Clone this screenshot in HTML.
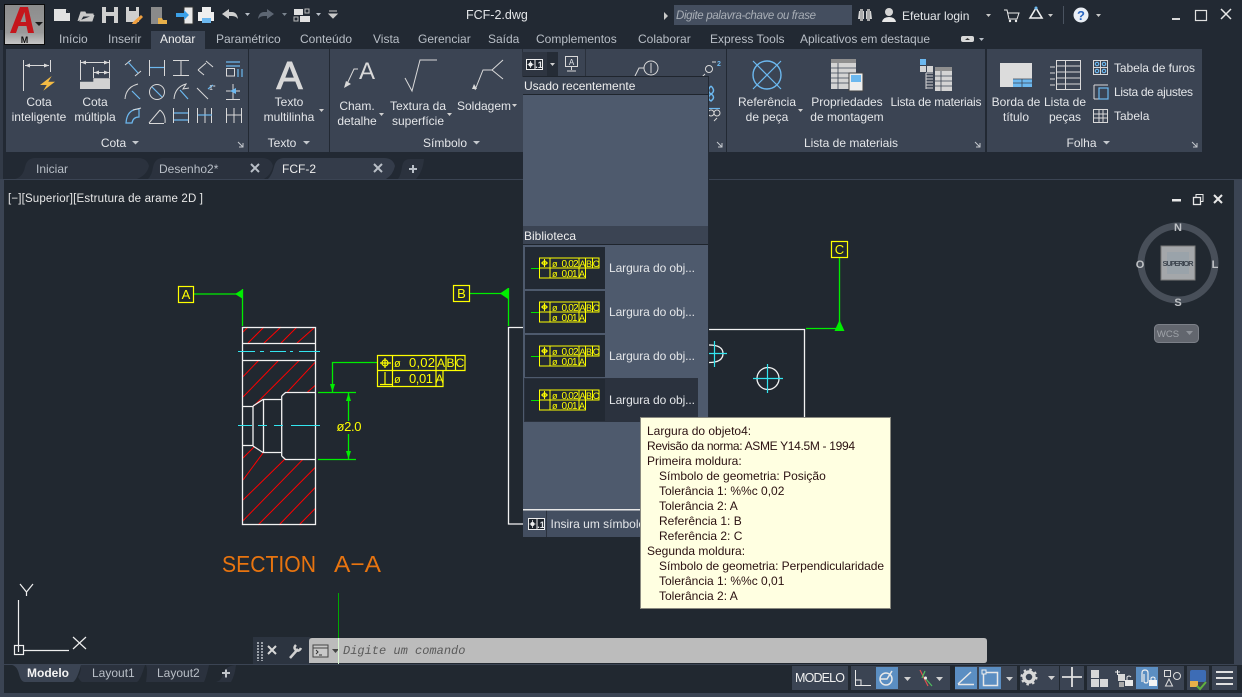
<!DOCTYPE html>
<html><head><meta charset="utf-8"><style>
html,body{margin:0;padding:0;background:#212830;width:1242px;height:697px;overflow:hidden}
svg{display:block}
text{font-family:"Liberation Sans",sans-serif;font-size:12px;fill:#e4e6e9}
.m{text-anchor:middle}
.tab{fill:#b9bfc7}
.t{fill:#2a1010}
.c{font-family:"Liberation Mono",monospace;font-style:italic;font-size:12px;fill:#5a5a5a}
.ic{fill:none;stroke:#d9d9d9;stroke-width:1}
.bl{fill:none;stroke:#6cb8ef;stroke-width:1.2}
.sb{fill:none;stroke:#e8e8e8;stroke-width:1.5}
</style></head><body>
<svg width="1242" height="697" viewBox="0 0 1242 697" xmlns="http://www.w3.org/2000/svg">
<rect width="1242" height="697" fill="#212830"/>
<rect x="0" y="0" width="1242" height="180" fill="#222933"/>
<rect x="0" y="180" width="4" height="517" fill="#3b4453"/>
<rect x="1234" y="180" width="8" height="484" fill="#3b4453"/>
<rect x="0" y="30" width="3" height="150" fill="#323a47"/>

<!-- App button -->
<defs><linearGradient id="ab" x1="0" y1="0" x2="0" y2="1"><stop offset="0" stop-color="#8c8c8c"/><stop offset=".7" stop-color="#9a9a9a"/><stop offset="1" stop-color="#c8c8c8"/></linearGradient></defs>
<rect x="4.500" y="4.500" width="40" height="40" fill="url(#ab)" stroke="#0c0c0c"/>
<path d="M10 33 L20 7 L28 7 L34 33 L28 33 L26.500 26 L18.500 26 L16 33 Z M20.500 22 L26 22 L24.500 12 Z" fill="#c4161c" fill-rule="evenodd"/>
<path d="M35 22 h8 l-4 4z" fill="#1a1a1a"/>
<text x="24.500" y="43" class="m" style="font-size:9px;font-weight:bold;fill:#111">M</text>

<!-- QAT -->
<path d="M54 9 h12 l4 4 v8 h-16z" fill="#e2e2e2"/><path d="M66 9 l4 4 h-4z" fill="#222933"/>
<path d="M78 21 l3-9 h4 l1 2 h7 v2 h-10 l-3 5 h12 l2-6" fill="#c9c9c9" stroke="#c9c9c9"/>
<rect x="102" y="7" width="16" height="16" fill="#cfcfcf"/><rect x="106" y="7" width="8" height="5" fill="#222933"/><rect x="106" y="16" width="8" height="7" fill="#222933"/>
<rect x="126" y="7" width="13" height="15" fill="#cfcfcf"/><rect x="129" y="7" width="7" height="4" fill="#222933"/><path d="M133 22 l8-7 2 2-7 7-4 0z" fill="#f0a040"/>
<rect x="151" y="7" width="11" height="17" fill="#8a8a8a"/><path d="M158 18 h4 l1 2 h4 v4 h-9z" fill="#e8b04a"/>
<rect x="184" y="7" width="9" height="17" fill="#e8e8e8" stroke="#333"/><path d="M176 13 h8 v-3 l5 5-5 5 v-3 h-8z" fill="#3ba0e8"/>
<rect x="198" y="12" width="16" height="9" fill="#eee"/><rect x="202" y="7" width="9" height="5" fill="#eee"/><rect x="202" y="18" width="9" height="5" fill="#6cb8ef"/>
<path d="M222 14 l7-5 v3 h3 q5 0 6 7 q-2-3-6-3 h-3 v3z" fill="#cfcfcf"/>
<path d="M245 13 h5 l-2.500 3z" fill="#b9bfc7"/>
<path d="M274 14 l-7-5 v3 h-3 q-5 0-6 7 q2-3 6-3 h3 v3z" fill="#5d6673"/>
<path d="M282 13 h5 l-2.500 3z" fill="#7b848f"/>
<rect x="294" y="9" width="9" height="6" fill="#e0e0e0"/><rect x="300" y="16" width="10" height="6" fill="#e0e0e0"/><rect x="294" y="17" width="4" height="4" fill="none" stroke="#bbb"/><rect x="305" y="9" width="4" height="4" fill="none" stroke="#bbb"/>
<path d="M316 13 h5 l-2.500 3z" fill="#b9bfc7"/>
<path d="M329 11 h8 M329 14 h8 l-4 4z" fill="#c9c9c9" stroke="#c9c9c9"/>

<text x="466" y="19" style="font-size:12.500px">FCF-2.dwg</text>
<path d="M664 12 l4 4 -4 4z" fill="#c9c9c9"/>
<rect x="674" y="5" width="178" height="20" fill="#444e5f"/>
<text x="676" y="19" textLength="140" style="font-style:italic;fill:#a8aeb6;font-size:11.500px">Digite palavra-chave ou frase</text>
<path d="M859 11 h5 v8 h-6z M866 11 h5 l1 8 h-6z" fill="#d5d5d5"/><rect x="860" y="9" width="3" height="12" fill="#aaa"/><rect x="867" y="9" width="3" height="12" fill="#aaa"/>
<circle cx="889" cy="12" r="4" fill="#d5d5d5"/><path d="M882 22 q1-5 7-5 q6 0 7 5z" fill="#e8e8e8"/>
<text x="902" y="20">Efetuar login</text>
<path d="M986 14 h5 l-2.500 3z" fill="#c9c9c9"/>
<path d="M1004 10 h3 l2 9 h8 l2-6 h-11" class="ic" style="stroke:#eee"/><circle cx="1010" cy="21" r="1.200" fill="#eee"/><circle cx="1016" cy="21" r="1.200" fill="#eee"/>
<path d="M1030 18 l6-10 6 10z" class="ic" style="stroke:#eee;stroke-width:1.600"/><circle cx="1036" cy="8" r="1.500" fill="#6cb8ef"/>
<path d="M1048 14 h5 l-2.500 3z" fill="#c9c9c9"/>
<rect x="1063" y="6" width="1" height="18" fill="#4a5360"/>
<circle cx="1081" cy="15" r="7.500" fill="#e9eef5"/><text x="1081" y="20" class="m" style="font-weight:bold;font-size:13px;fill:#2a66c0">?</text>
<path d="M1096 14 h5 l-2.500 3z" fill="#c9c9c9"/>
<rect x="1172" y="18" width="8" height="2" fill="#d8d8d8"/>
<rect x="1195.500" y="10.500" width="11" height="10" fill="none" stroke="#e0e0e0" stroke-width="1.200"/>
<path d="M1221 9 l10 10 M1231 9 l-10 10" stroke="#e8e8e8" stroke-width="1.500"/>

<!-- Ribbon tabs -->
<rect x="151" y="31" width="54" height="18" fill="#3b4453"/>
<g>
<text x="59" y="43" class="tab">Início</text><text x="108" y="43" class="tab">Inserir</text>
<text x="160" y="43" style="fill:#f0f0f0">Anotar</text>
<text x="216" y="43" class="tab">Paramétrico</text><text x="300" y="43" class="tab">Conteúdo</text><text x="373" y="43" class="tab">Vista</text>
<text x="418" y="43" class="tab">Gerenciar</text><text x="488" y="43" class="tab">Saída</text><text x="536" y="43" class="tab">Complementos</text>
<text x="638" y="43" class="tab">Colaborar</text><text x="710" y="43" class="tab">Express Tools</text><text x="800" y="43" class="tab">Aplicativos em destaque</text>
</g>
<rect x="961" y="36" width="13" height="6" rx="2" fill="#d8d8d8"/><path d="M965 40 l2.500-2 2.500 2z" fill="#333"/>
<path d="M979 38 h5 l-2.500 3z" fill="#b9bfc7"/>

<!-- Ribbon panels -->
<rect x="6" y="49" width="242" height="103" fill="#3b4453"/>
<rect x="249" y="49" width="80" height="103" fill="#3b4453"/>
<rect x="330" y="49" width="396" height="103" fill="#3b4453"/>
<rect x="727" y="49" width="258" height="103" fill="#3b4453"/>
<rect x="987" y="49" width="215" height="103" fill="#3b4453"/>
<rect x="522" y="49" width="1" height="28" fill="#2a313c"/>
<rect x="585" y="49" width="1" height="28" fill="#2a313c"/>

<!-- Cota icons -->
<path d="M23.500 60 v31 M50.500 60 v12 M25 65.500 h24" class="ic"/><path d="M25 65.500 l5-2 v4z M49 65.500 l-5-2 v4z" fill="#d9d9d9"/>
<path d="M51.700 76 L40 85 H46.700 L43.300 90.700 L55 81.700 H48.300z" fill="#f4bb44"/>
<path d="M80.500 60 v20 M109.500 60 v18 M81 62.500 h28 M94 72.500 h15 M93.500 67 v11" class="ic"/>
<path d="M80 89 V81.700 H93.300 V78.300 H110 V89z" fill="#d2d2d2"/>
<path d="M81 62.500 l5-2 v4z M109 62.500 l-5-2 v4z M94 72.500 l5-2 v4z M109 72.500 l-5-2 v4z" fill="#d9d9d9"/>

<path d="M125 65 l6-5 M135 76 l6-5" class="ic"/><path d="M128 62 l10 11" class="bl" stroke-width="1.500"/>
<path d="M149.500 60 v16 M164.500 60 v16" class="ic"/><path d="M150 67.500 h14" class="bl"/>
<path d="M173 60.500 h16 M173 75.500 h16" class="ic"/><path d="M181 61 v14" class="ic"/>
<path d="M198 70 l8-7 M206 61 l7 6 M198 70 l6 5" class="ic"/>
<rect x="226.500" y="68.500" width="8" height="7.500" class="ic"/><path d="M226 62 h14 M226 66 h14 M238 69 v8 M242 69 v8" class="bl"/>
<path d="M125 99 q1-12 13-15" class="ic"/><path d="M132 91 l8 8" class="bl"/>
<circle cx="157" cy="92" r="7.500" class="ic"/><path d="M152 87 l10 10" class="bl"/>
<path d="M174 99 q1-12 12-15 l-3 5 l6-1" class="ic"/><path d="M180 90 l8 9" class="bl"/>
<path d="M197 88 l11 11" class="ic"/><path d="M208 89 l5-4" class="bl"/><text x="209" y="90" style="font-size:7px">1°</text>
<path d="M226 91 h14 M233 84 v16 M226 99.500 h14" class="ic"/><path d="M230 91 l6-3 v6z" fill="#6cb8ef"/>
<path d="M126 123 q1-14 13-14 v8 q-6 0-7 6z" class="bl"/><path d="M133 110 l8-2" class="ic"/>
<path d="M149 123.500 h15 M149 123 l11-13 M160 110 q6 5 5 13" class="ic"/>
<path d="M173.500 108 v15 M188.500 108 v15" class="ic"/><path d="M174 113 h14 M174 120 h14" class="bl"/>
<path d="M197.500 108 v15 M205 108 v15 M211.500 108 v15" class="ic"/><path d="M198 115 h14" class="bl"/>
<path d="M226.500 108 v15 M241.500 108 v15 M234 108 v15" class="ic"/><path d="M227 115 h14" class="ic"/>

<text x="39" y="106" class="m">Cota</text><text x="39" y="121" class="m">inteligente</text>
<text x="95" y="106" class="m">Cota</text><text x="95" y="121" class="m">múltipla</text>
<text x="113.500" y="147" class="m">Cota</text><path d="M132 141 h7 l-3.500 3.500z" fill="#c4c8cd"/>
<path d="M238 142 l5 5 M243 143 v4 h-4" stroke="#c4c8cd" fill="none"/>

<text x="289.500" y="89" class="m" style="font-size:39px;fill:#d8d8d8;stroke:#d8d8d8;stroke-width:1">A</text>
<text x="289" y="106" class="m">Texto</text><text x="289" y="121" class="m">multilinha</text>
<path d="M319 109 h5 l-2.500 3z" fill="#d0d0d0"/>
<text x="282" y="147" class="m">Texto</text><path d="M303 141 h7 l-3.500 3.500z" fill="#c4c8cd"/>

<!-- Simbolo -->
<text x="367" y="79" class="m" style="font-size:24px;fill:#d8d8d8">A</text>
<path d="M358 69 h-4 l-8 17" class="ic"/><path d="M344 88 l2-7 5 3z" fill="#d9d9d9"/>
<text x="357" y="110" class="m">Cham.</text><text x="357" y="125" class="m">detalhe</text>
<path d="M379 113 h5 l-2.500 3z" fill="#d0d0d0"/>
<path d="M405 78 l7 13 8-31 h17" class="ic" style="fill:none"/>
<text x="418" y="110" class="m">Textura da</text><text x="418" y="125" class="m">superfície</text>
<path d="M447 113 h5 l-2.500 3z" fill="#d0d0d0"/>
<path d="M475 90 l8-20 h9 l11-10 M492 70 l11 9" class="ic"/><path d="M472 89 l5 0 -3-5z" fill="#d9d9d9"/>
<text x="484" y="110" class="m">Soldagem</text><path d="M512 104 h5 l-2.500 3z" fill="#d0d0d0"/>
<text x="445" y="147" class="m">Símbolo</text><path d="M473 141 h7 l-3.500 3.500z" fill="#c4c8cd"/>

<!-- FCF button -->
<rect x="522" y="52" width="25" height="25" fill="#2e3541"/><rect x="547" y="52" width="11" height="25" fill="#252c36"/>
<rect x="526.500" y="59.500" width="16" height="10" fill="#1d232b" stroke="#eee"/>
<path d="M535 60 v9" stroke="#eee"/><path d="M530.500 61 v7 M527.500 64.500 h6" stroke="#eee" stroke-width=".8"/><circle cx="530.500" cy="64.500" r="2" fill="#eee"/>
<text x="539" y="68" class="m" style="font-size:9px;font-weight:bold">.1</text>
<path d="M550 63 h5 l-2.500 3z" fill="#d0d0d0"/>
<rect x="565.500" y="56.500" width="12" height="10" class="ic"/><text x="571.500" y="65" class="m" style="font-size:8px">A</text><path d="M571.500 67 v3 M567 71 h9" class="ic"/>
<circle cx="651" cy="68" r="7" class="ic"/><path d="M651 63 v10 M644 68 h-5 l-4 8" class="ic"/>
<circle cx="709" cy="69" r="3.500" class="ic"/><path d="M705 74 l-3 3" class="ic"/><path d="M712 62 h4" class="ic"/><text x="717" y="66" style="font-size:7px;fill:#6cb8ef;font-weight:bold">2</text>
<path d="M711 86 q-5 5 0 8 q5 3 0 7 q-5-3 0-7 q5-3 0-8" class="bl" style="stroke-width:1.500"/>
<path d="M708 108.500 h12" class="bl"/><circle cx="711" cy="113" r="3" class="ic"/><circle cx="717" cy="113" r="3" class="ic"/><path d="M714 121 l3-3" class="ic"/>
<path d="M717 142 l5 5 M722 143 v4 h-4" stroke="#c4c8cd" fill="none"/>

<!-- Lista de materiais -->
<circle cx="767" cy="75" r="14" class="bl" style="stroke-width:1.400"/><path d="M753 61 l28 28 M781 61 l-28 28" class="bl"/>
<text x="767" y="106" class="m">Referência</text><text x="767" y="121" class="m">de peça</text>
<path d="M798 109 h5 l-2.500 3z" fill="#d0d0d0"/>
<rect x="831" y="59" width="25" height="30" fill="#d4d4d4"/><rect x="831" y="59" width="25" height="4" fill="#8f8f8f"/>
<path d="M831 68 h25 M831 73 h25 M831 78 h25 M831 83 h25 M838 63 v26" stroke="#3b4453" stroke-width=".8"/>
<rect x="849" y="73" width="14" height="18" fill="#eee" stroke="#444"/><rect x="851" y="75" width="10" height="7" fill="#6cb8ef"/>
<text x="847" y="106" class="m">Propriedades</text><text x="847" y="121" class="m">de montagem</text>
<rect x="920" y="59" width="6" height="6" fill="#6cb8ef"/><rect x="920" y="66" width="6" height="6" fill="#d4d4d4"/><rect x="927" y="66" width="6" height="6" fill="#d4d4d4"/>
<path d="M926 73 h7 M926 76 h7 M926 79 h7 M926 82 h7 M926 85 h7 M926 88 h7 M926 73 v16" stroke="#d4d4d4" fill="none"/>
<rect x="935" y="67" width="17" height="24" fill="#d4d4d4"/><rect x="935" y="67" width="17" height="4" fill="#8f8f8f"/><path d="M935 76 h17 M935 81 h17 M935 86 h17 M941 71 v20" stroke="#3b4453" stroke-width=".8"/>
<text x="936" y="106" class="m" textLength="91">Lista de materiais</text>
<text x="851" y="147" class="m">Lista de materiais</text>
<path d="M975 142 l5 5 M980 143 v4 h-4" stroke="#c4c8cd" fill="none"/>

<!-- Folha -->
<rect x="1000" y="63" width="32" height="24" fill="#dcdcdc"/><rect x="1013" y="79" width="19" height="8" fill="#6cb8ef"/><path d="M1013 79 h19 M1013 83 h19 M1022 79 v8" stroke="#3b4453" stroke-width=".8"/>
<rect x="1056.500" y="60.500" width="24" height="29" class="ic"/><path d="M1056 66 h25 M1056 72 h25 M1056 78 h25 M1056 84 h25 M1065.500 60 v30" class="ic"/>
<path d="M1050 67 h5 M1050 73 h5 M1050 79 h5 M1050 85 h5" class="ic"/>
<text x="1016" y="106" class="m">Borda de</text><text x="1016" y="121" class="m">título</text>
<text x="1065" y="106" class="m">Lista de</text><text x="1065" y="121" class="m">peças</text>
<rect x="1093.500" y="60.500" width="14" height="14" class="ic"/><path d="M1100.500 61 v14 M1094 67.500 h14" class="ic"/>
<circle cx="1097" cy="64" r="1.700" class="bl"/><circle cx="1104" cy="64" r="1.700" class="bl"/><circle cx="1097" cy="71" r="1.700" class="bl"/><circle cx="1104" cy="71" r="1.700" class="bl"/>
<text x="1114" y="72" textLength="81">Tabela de furos</text>
<path d="M1094 85 h14 M1094 99 h14 M1094 85 v14" class="ic"/><rect x="1099" y="88" width="9" height="11" class="bl"/>
<text x="1114" y="96" textLength="79">Lista de ajustes</text>
<rect x="1093.500" y="109.500" width="14" height="13" class="ic"/><path d="M1094 114 h14 M1094 118 h14 M1099 110 v13 M1103 110 v13" class="ic"/>
<text x="1114" y="120">Tabela</text>
<text x="1081.500" y="147" class="m">Folha</text><path d="M1103 141 h7 l-3.500 3.500z" fill="#c4c8cd"/>
<path d="M1192 142 l5 5 M1197 143 v4 h-4" stroke="#c4c8cd" fill="none"/>

<!-- File tabs -->
<path d="M15 179 q8-2 10-12 q2-9 10-9 h103 q9 0 11 8 q-2 9-12 13z" fill="#2b323e"/>
<path d="M148 179 q4-4 5-12 q2-9 10-9 h99 q9 0 11 8 q-2 9-9 13z" fill="#2b323e"/>
<path d="M268 179 q4-4 6-12 q2-9 10-9 h100 q9 0 11 8 q-2 9-9 13z" fill="#343c4a"/>
<path d="M398 179 q3-4 4-12 q1-8 8-8 h14 q-1 12-8 20z" fill="#2b323e"/>
<rect x="0" y="179" width="1242" height="1" fill="#3b4453"/>
<text x="36" y="173" class="tab">Iniciar</text>
<text x="159" y="173" class="tab">Desenho2*</text>
<text x="282" y="173" style="fill:#eee">FCF-2</text>
<path d="M251 164 l8 8 M259 164 l-8 8" stroke="#b9bfc7" stroke-width="2"/>
<path d="M374 164 l8 8 M382 164 l-8 8" stroke="#b9bfc7" stroke-width="2"/>
<path d="M413 165 v8 M409 169 h8" stroke="#b9bfc7" stroke-width="2"/>

<!-- Viewport label -->
<text x="8" y="202" textLength="195" style="fill:#e8e8e8;font-size:11.500px">[−][Superior][Estrutura de arame 2D ]</text>
<rect x="1172" y="199" width="9" height="2.500" fill="#e8e8e8"/>
<rect x="1193.500" y="197.500" width="7" height="7" fill="none" stroke="#e8e8e8" stroke-width="1.300"/><path d="M1196 197 v-2.500 h7 v7 h-2.500" fill="none" stroke="#e8e8e8"/>
<path d="M1214 195 l8 8 M1222 195 l-8 8" stroke="#e8e8e8" stroke-width="2"/>

<!-- Nav cube -->
<circle cx="1178" cy="263" r="37" fill="none" stroke="#484f59" stroke-width="7"/>
<rect x="1161" y="246" width="34" height="34" fill="#a4a7aa" stroke="#777"/><rect x="1167" y="252" width="22" height="22" fill="#9aa3aa"/>
<text x="1178" y="266" class="m" textLength="31" style="font-size:7.500px;font-weight:bold;fill:#3e4650">SUPERIOR</text>
<text x="1178" y="231" class="m" style="font-size:11px;font-weight:bold;fill:#bfc2c5">N</text>
<text x="1178" y="306" class="m" style="font-size:11px;font-weight:bold;fill:#bfc2c5">S</text>
<text x="1140" y="268" class="m" style="font-size:11px;font-weight:bold;fill:#bfc2c5">O</text>
<text x="1215" y="268" class="m" style="font-size:11px;font-weight:bold;fill:#bfc2c5">L</text>
<rect x="1154.500" y="324.500" width="44" height="18" rx="4" fill="#62666e" stroke="#7c8088"/>
<text x="1168" y="337" class="m" style="font-size:9.500px;fill:#a0a4aa">WCS</text><path d="M1186 331 h7 l-3.500 4z" fill="#8f939a"/>

<!-- Drawing -->
<g fill="none">
<!-- Hatch -->
<g stroke="#ff0000" stroke-width="1">
<path d="M243 332 L248 327 M248 343 L264 327 M264 343 L281 327 M281 343 L297 327 M297 343 L314 328"/>
<path d="M243 376.700 L259 360 M243 397 L278 361 M253 406.700 L299 360.700 M286.700 392.700 L315.700 361.700 M306.700 392.700 L315.700 385"/>
<path d="M243 458 L254 447 M243 480 L263 453 M243 500 L285 459 M243 520.700 L303 459.300 M258 525 L315.700 467 M279 525 L315.700 487 M299 525 L315.700 508"/>
</g>
<!-- Part -->
<g stroke="#f2f2f2" stroke-width="1.300">
<rect x="242.500" y="327.500" width="73" height="197"/>
<path d="M243 343.500 H315 M243 360.500 H315"/>
<path d="M243 406.500 H253 V445.500 H243"/>
<path d="M253 406 L263 399.500 H281.700 M253 446 L263 452.500 H281.700 M263.500 399.500 V452.500"/>
<path d="M281.700 396 L285.500 392.500 H315.500 M281.700 456 L285.500 459.500 H315.500 M281.700 396 V456"/>
</g>
<g stroke="#33e6f0" stroke-width="1">
<path d="M238 351.500 H255 M260 351.500 H264 M270 351.500 H286 M290 351.500 H293 M299 351.500 H320"/>
<path d="M238 425.500 H252 M258 425.500 H267 M274 425.500 H283 M291 425.500 H320"/>
</g>
<!-- Dim green -->
<g stroke="#00ee00" stroke-width="1.300">
<path d="M194 294 H243 M242.500 289 V326"/>
<path d="M318 392.500 H356 M318 459.500 H356"/>
<path d="M348.500 393 V421 M348.500 434 V459"/>
<path d="M377 362.500 H332.500 V392"/>
<path d="M470 293.500 H508 M508.500 288 V326"/>
<path d="M806 328.500 H839 M839.500 258 V330"/>
</g>
<g fill="#00ee00">
<path d="M235 294 L243 289 V299z"/>
<path d="M500 293.500 L508 288 V299z"/>
<path d="M834.500 331 L839.500 320 L844.500 331z"/>
<path d="M332.500 392 L330 384 H335z"/>
<path d="M348.500 393 L346 401 H351z M348.500 459 L346 451 H351z"/>
</g>
<rect x="338" y="593" width="1" height="45" fill="#00a800"/>
<!-- Labels -->
<g stroke="#ffff00" stroke-width="1.200">
<rect x="178.500" y="286.500" width="15" height="16"/><rect x="453.500" y="285.500" width="16" height="16"/><rect x="831.500" y="241.500" width="16" height="16"/>
<path d="M377.500 355.500 H465 V370.500 H443 V386.500 H377.500 Z M377.500 370.500 H443 M392.500 355.500 V386.500 M436 355.500 V386.500 M446 355.500 V370.500 M455.500 355.500 V370.500"/>
<path d="M385 358 V368 M380 363 H391"/><circle cx="385" cy="363" r="3"/>
<path d="M385 372 V384 M380 384.500 H392"/>
</g>
<!-- Right part -->
<g stroke="#f2f2f2" stroke-width="1.300">
<path d="M523 327.500 H508.500 V524 H523"/>
<path d="M708 329.500 H804.500 V417"/>
<circle cx="768" cy="378.500" r="11"/>
<path d="M709 345 Q723 345 723 353.500 Q723 362.500 709 362.500"/>
</g>
<g stroke="#33e6f0" stroke-width="1.200">
<path d="M753 378.500 H783 M767.500 364 V393"/>
<path d="M709 353.500 H727 M714.500 341 V367"/>
</g>
</g>
<text x="186" y="299" class="m" style="font-size:13px;fill:#ffff00">A</text>
<text x="461.500" y="298" class="m" style="font-size:13px;fill:#ffff00">B</text>
<text x="839.500" y="254" class="m" style="font-size:13px;fill:#ffff00">C</text>
<text x="409" y="367" textLength="26" style="font-size:13px;fill:#ffff00">0,02</text>
<text x="394" y="367" style="font-size:11px;fill:#ffff00">ø</text>
<text x="394" y="383" style="font-size:11px;fill:#ffff00">ø</text>
<text x="409" y="383" textLength="24" style="font-size:13px;fill:#ffff00">0,01</text>
<text x="441" y="367" class="m" style="font-size:12px;fill:#ffff00">A</text>
<text x="450.500" y="367" class="m" style="font-size:12px;fill:#ffff00">B</text>
<text x="460" y="367" class="m" style="font-size:12px;fill:#ffff00">C</text>
<text x="439.500" y="383" class="m" style="font-size:12px;fill:#ffff00">A</text>
<text x="349" y="431" class="m" style="font-size:13px;fill:#ffff00" textLength="25">ø2.0</text>
<text x="222" y="572" textLength="94" lengthAdjust="spacingAndGlyphs" style="font-size:23.500px;fill:#e8740f">SECTION</text>
<text x="334" y="572" textLength="47" lengthAdjust="spacingAndGlyphs" style="font-size:23.500px;fill:#e8740f">A−A</text>

<!-- UCS -->
<path d="M18.500 600 V652 M24 650.500 H69" stroke="#eee" stroke-width="1.200" fill="none"/>
<rect x="14.500" y="645.500" width="9" height="9" fill="none" stroke="#eee" stroke-width="1.200"/>
<path d="M20 584 L26.500 592 L33 584 M26.500 592 V596" stroke="#eee" stroke-width="1.200" fill="none"/>
<path d="M73 637 L86 649 M86 637 L73 649" stroke="#eee" stroke-width="1.200" fill="none"/>

<!-- Dropdown -->
<rect x="523" y="77" width="186" height="460" fill="#4e5a6d"/>
<rect x="523" y="77" width="186" height="18" fill="#3b4453"/>
<path d="M523 76.500 H709 M523 94.500 H709" stroke="#1f252d"/>
<rect x="708" y="77" width="1" height="460" fill="#222933"/>
<text x="524" y="90" style="fill:#eee">Usado recentemente</text>
<rect x="523" y="226" width="185" height="18" fill="#3b4453"/>
<path d="M523 244.500 H708" stroke="#1f252d"/>
<text x="524" y="240" style="fill:#eee">Biblioteca</text>

<rect x="524" y="378" width="174" height="44" fill="#2b323e"/>
<rect x="525" y="247" width="80" height="42" fill="#222933"/>
<rect x="525" y="291" width="80" height="42" fill="#222933"/>
<rect x="525" y="335" width="80" height="42" fill="#222933"/>
<rect x="525" y="379" width="80" height="42" fill="#222933"/>

<g fill="none"><path d="M531 268.500 H540" stroke="#00e000"/><g stroke="#ffff00"><path d="M539.500 258 H599 V268 H585.500 V278 H539.500 Z M539.500 268 H585.500 M550 258 V278 M579 258 V278 M585.500 258 V268 M592.500 258 V268"/><path d="M544.500 259 V267 M541 263 H548"/><circle cx="544.500" cy="263" r="2"/></g>
<text x="552" y="267" style="font-size:9px;fill:#ffff00">ø</text><text x="561.500" y="267" textLength="17" style="font-size:10px;fill:#ffff00">0,02</text><text x="582.500" y="267" class="m" style="font-size:9px;fill:#ffff00">A</text><text x="589" y="267" class="m" style="font-size:9px;fill:#ffff00">B</text><text x="596" y="267" class="m" style="font-size:9px;fill:#ffff00">C</text>
<text x="552" y="277" style="font-size:9px;fill:#ffff00">ø</text><text x="561.500" y="277" textLength="16" style="font-size:10px;fill:#ffff00">0,01</text><text x="582" y="277" class="m" style="font-size:9px;fill:#ffff00">A</text></g>
<g transform="translate(0 44)" fill="none"><path d="M531 268.500 H540" stroke="#00e000"/><g stroke="#ffff00"><path d="M539.500 258 H599 V268 H585.500 V278 H539.500 Z M539.500 268 H585.500 M550 258 V278 M579 258 V278 M585.500 258 V268 M592.500 258 V268"/><path d="M544.500 259 V267 M541 263 H548"/><circle cx="544.500" cy="263" r="2"/></g>
<text x="552" y="267" style="font-size:9px;fill:#ffff00">ø</text><text x="561.500" y="267" textLength="17" style="font-size:10px;fill:#ffff00">0,02</text><text x="582.500" y="267" class="m" style="font-size:9px;fill:#ffff00">A</text><text x="589" y="267" class="m" style="font-size:9px;fill:#ffff00">B</text><text x="596" y="267" class="m" style="font-size:9px;fill:#ffff00">C</text>
<text x="552" y="277" style="font-size:9px;fill:#ffff00">ø</text><text x="561.500" y="277" textLength="16" style="font-size:10px;fill:#ffff00">0,01</text><text x="582" y="277" class="m" style="font-size:9px;fill:#ffff00">A</text></g>
<g transform="translate(0 88)" fill="none"><path d="M531 268.500 H540" stroke="#00e000"/><g stroke="#ffff00"><path d="M539.500 258 H599 V268 H585.500 V278 H539.500 Z M539.500 268 H585.500 M550 258 V278 M579 258 V278 M585.500 258 V268 M592.500 258 V268"/><path d="M544.500 259 V267 M541 263 H548"/><circle cx="544.500" cy="263" r="2"/></g>
<text x="552" y="267" style="font-size:9px;fill:#ffff00">ø</text><text x="561.500" y="267" textLength="17" style="font-size:10px;fill:#ffff00">0,02</text><text x="582.500" y="267" class="m" style="font-size:9px;fill:#ffff00">A</text><text x="589" y="267" class="m" style="font-size:9px;fill:#ffff00">B</text><text x="596" y="267" class="m" style="font-size:9px;fill:#ffff00">C</text>
<text x="552" y="277" style="font-size:9px;fill:#ffff00">ø</text><text x="561.500" y="277" textLength="16" style="font-size:10px;fill:#ffff00">0,01</text><text x="582" y="277" class="m" style="font-size:9px;fill:#ffff00">A</text></g>
<g transform="translate(0 132)" fill="none"><path d="M531 268.500 H540" stroke="#00e000"/><g stroke="#ffff00"><path d="M539.500 258 H599 V268 H585.500 V278 H539.500 Z M539.500 268 H585.500 M550 258 V278 M579 258 V278 M585.500 258 V268 M592.500 258 V268"/><path d="M544.500 259 V267 M541 263 H548"/><circle cx="544.500" cy="263" r="2"/></g>
<text x="552" y="267" style="font-size:9px;fill:#ffff00">ø</text><text x="561.500" y="267" textLength="17" style="font-size:10px;fill:#ffff00">0,02</text><text x="582.500" y="267" class="m" style="font-size:9px;fill:#ffff00">A</text><text x="589" y="267" class="m" style="font-size:9px;fill:#ffff00">B</text><text x="596" y="267" class="m" style="font-size:9px;fill:#ffff00">C</text>
<text x="552" y="277" style="font-size:9px;fill:#ffff00">ø</text><text x="561.500" y="277" textLength="16" style="font-size:10px;fill:#ffff00">0,01</text><text x="582" y="277" class="m" style="font-size:9px;fill:#ffff00">A</text></g>

<text x="609" y="272" textLength="86">Largura do obj...</text>
<text x="609" y="316" textLength="86">Largura do obj...</text>
<text x="609" y="360" textLength="86">Largura do obj...</text>
<text x="609" y="404" textLength="86">Largura do obj...</text>

<rect x="523" y="509" width="186" height="1.500" fill="#e8e8e8"/>
<rect x="523" y="510.500" width="186" height="26.500" fill="#434e60"/>
<rect x="546" y="510.500" width="1" height="26.500" fill="#2b323e"/>
<rect x="528.500" y="518.500" width="16" height="11" fill="#1d232b" stroke="#eee"/><path d="M537 519 v10" stroke="#eee"/><path d="M532.500 520 v8 M529.500 524 h6" stroke="#eee" stroke-width=".8"/><circle cx="532.500" cy="524" r="2" fill="#eee"/><text x="541" y="528" class="m" style="font-size:9px;font-weight:bold">.1</text>
<text x="550.500" y="528">Insira um símbolo</text>

<!-- Tooltip -->
<rect x="640.500" y="417.500" width="250" height="191" fill="#ffffe1" stroke="#8a8a80"/>
<g>
<text x="647" y="435" class="t">Largura do objeto4:</text>
<text x="647" y="450" class="t" textLength="208">Revisão da norma: ASME Y14.5M - 1994</text>
<text x="647" y="465" class="t">Primeira moldura:</text>
<text x="659" y="480" class="t">Símbolo de geometria: Posição</text>
<text x="659" y="495" class="t">Tolerância 1: %%c 0,02</text>
<text x="659" y="510" class="t">Tolerância 2: A</text>
<text x="659" y="525" class="t">Referência 1: B</text>
<text x="659" y="540" class="t">Referência 2: C</text>
<text x="647" y="555" class="t">Segunda moldura:</text>
<text x="659" y="570" class="t" textLength="225">Símbolo de geometria: Perpendicularidade</text>
<text x="659" y="585" class="t">Tolerância 1: %%c 0,01</text>
<text x="659" y="600" class="t">Tolerância 2: A</text>
</g>

<!-- Command line -->
<rect x="253" y="637" width="57" height="27" fill="#2c3440"/>
<path d="M258 642 v19 M262 642 v19" stroke="#9aa0a8" stroke-width="2" stroke-dasharray="2 1"/>
<path d="M268 646 l8 8 M276 646 l-8 8" stroke="#d8d8d8" stroke-width="2"/>
<path d="M290 658 l8-9 M296 645 q-3 3 0 5 q3 2 5-2" stroke="#d0d0d0" stroke-width="2.500" fill="none"/>
<path d="M309 641 q0-3 3-3 h672 q3 0 3 3 v19 q0 3 -3 3 h-675z" fill="#bcbcbc"/>
<rect x="313" y="645" width="15" height="12" fill="#c8c8c8" stroke="#444"/><path d="M313 648 h15" stroke="#444"/><path d="M316 650 l2 2-2 2 M319 655 h3" stroke="#333" fill="none"/>
<path d="M332 649 h7 l-3.500 4z" fill="#444"/>
<rect x="338" y="638" width="1" height="26" fill="#d8f5d0"/>
<text x="343" y="654" class="c">Digite um comando</text>

<!-- Bottom -->
<rect x="0" y="664" width="1242" height="1" fill="#3b4453"/>
<rect x="0" y="693" width="1242" height="4" fill="#3b4453"/>
<path d="M12 665 q5 1 7 9 q2 8 6 8 h48 q4-2 8-17z" fill="#3b4453"/>
<path d="M82 682 h55 q3-1 8-17 q-3 0 -4 0 h-60 q0 8 -3 12 q2 4 4 5z" fill="#2b323e"/>
<path d="M146 682 h58 q2-4 5-17 h-63 q2 4 0 17z" fill="#2b323e"/>
<path d="M216 682 q5-1 7-7 q1-9 13-10 q-1 10-5 17z" fill="#2b323e"/>
<text x="27" y="677" style="font-weight:bold;fill:#f4f4f4">Modelo</text>
<text x="92" y="677" class="tab">Layout1</text>
<text x="157" y="677" class="tab">Layout2</text>
<path d="M222 669 h8 M226 665.500 v8" stroke="#c0c4c9" stroke-width="2" transform="translate(0 4)"/>

<!-- Status bar -->
<rect x="792" y="666" width="56" height="24" fill="#3b4453"/>
<rect x="851" y="666" width="99" height="24" fill="#3b4453"/>
<rect x="955" y="666" width="62" height="24" fill="#3b4453"/>
<rect x="1020" y="666" width="39" height="24" fill="#3b4453"/>
<rect x="1060" y="666" width="24" height="24" fill="#3b4453"/>
<rect x="1087" y="666" width="97" height="24" fill="#3b4453"/>
<rect x="1187" y="666" width="22" height="24" fill="#3b4453"/>
<rect x="1212" y="666" width="25" height="24" fill="#3b4453"/>
<rect x="876" y="667" width="22" height="22" fill="#5b8ec2"/>
<rect x="955" y="667" width="22" height="22" fill="#5b8ec2"/>
<rect x="979" y="667" width="22" height="22" fill="#5b8ec2"/>
<rect x="1136" y="667" width="22" height="22" fill="#5b8ec2"/>
<text x="820" y="682" class="m" textLength="50" style="fill:#f0f0f0;font-size:12.500px">MODELO</text>
<path d="M855.500 670 V685.500 H871 M855.500 680 H861 V685" class="sb" style="stroke-width:1"/>
<circle cx="886" cy="679" r="6" class="sb"/><path d="M880 679 h7 l5-8" class="sb"/>
<path d="M904 677 h7 l-3.500 4z" fill="#d0d0d0"/>
<path d="M920 670 l8 16" stroke="#e05050" stroke-width="1.200"/><path d="M925 671 l-3 7 M932 686 l-7-8" stroke="#50c060" stroke-width="1.200"/><circle cx="925.500" cy="678" r="1.500" fill="#eee"/>
<path d="M943 677 h-7 l3.500 4z" fill="#d0d0d0"/>
<path d="M958 684.500 H974 M958 684 L971 672" class="sb"/>
<rect x="983.500" y="672.500" width="14" height="13" class="sb"/><rect x="982" y="670" width="4" height="4" fill="#5b8ec2" stroke="#eee"/>
<path d="M1006 677 h7 l-3.500 4z" fill="#d0d0d0"/>
<circle cx="1029" cy="677" r="5" fill="none" stroke="#d8d8d8" stroke-width="3.500"/><circle cx="1029" cy="677" r="7.500" fill="none" stroke="#d8d8d8" stroke-width="2" stroke-dasharray="2.500 3.400"/>
<path d="M1048 676 h7 l-3.500 4z" fill="#d0d0d0"/>
<path d="M1072 667 V687 M1062 677 H1082" stroke="#e0e0e0" stroke-width="1.800"/>
<rect x="1091" y="670" width="8" height="8" fill="#d8d8d8"/><rect x="1091" y="679" width="8" height="8" fill="#d8d8d8"/><rect x="1100" y="679" width="8" height="8" fill="#d8d8d8"/>
<path d="M1115 672 h5 M1117.500 670 v5" stroke="#eee"/><rect x="1118" y="674" width="7" height="7" fill="#d8d8d8"/><rect x="1125" y="680" width="8" height="6" fill="#e8e8e8"/><path d="M1127 680 v-3 q2-2 4 0" stroke="#e8e8e8" fill="none"/><rect x="1119" y="682" width="5" height="5" fill="#aaa"/>
<path d="M1142 682 v-9 q0-3 3-3 t3 3 v8 q0 2 -2 2 t-2-2 v-7" fill="none" stroke="#eee" stroke-width="1.200"/>
<rect x="1149" y="680" width="8" height="6" fill="#f4f4f4"/><path d="M1151 680 v-2 q2-2 4 0 v2" stroke="#f4f4f4" fill="none"/>
<rect x="1164.500" y="670.500" width="6" height="6" fill="none" stroke="#ddd"/><circle cx="1177" cy="676" r="3.500" fill="none" stroke="#ddd"/><path d="M1169 679 l-3.500 7 h7z" fill="none" stroke="#ddd"/>
<rect x="1190" y="670" width="16" height="12" rx="2" fill="#3d6cb5"/><rect x="1190" y="681" width="8" height="6" fill="#e8b04a"/><path d="M1197 686 l3 3 6-7" stroke="#60b040" stroke-width="2" fill="none"/>
<path d="M1216 672 H1233 M1216 678 H1233 M1216 684 H1233" stroke="#e0e0e0" stroke-width="2"/>
</svg>
</body></html>
